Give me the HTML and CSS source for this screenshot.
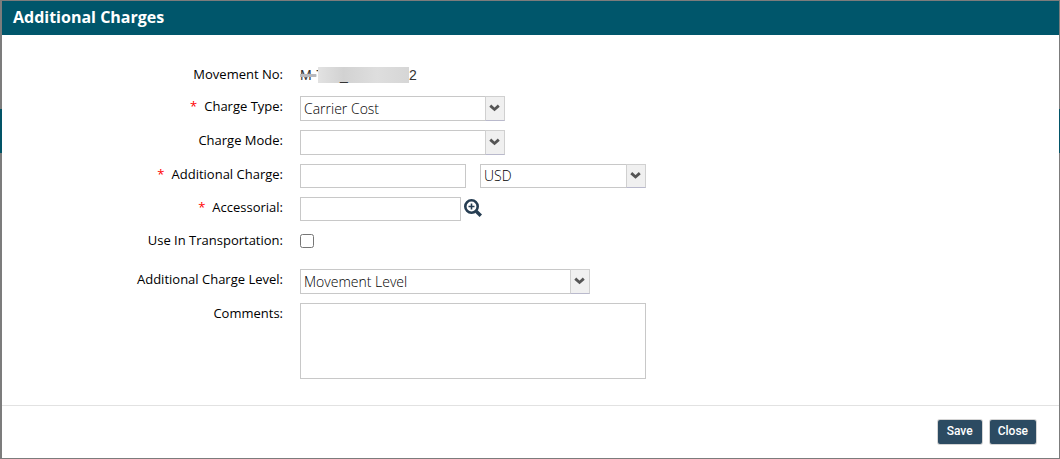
FILE: index.html
```html
<!DOCTYPE html>
<html lang="en">
<head>
<meta charset="utf-8">
<title>Additional Charges</title>
<link rel="stylesheet" href="styles.css">
</head>
<body>
<form class="dialog">
  <h1 class="dialog-title">Additional Charges</h1>
  <div class="fields">
    <span class="label">Movement No:</span>
    <div class="control value"><s class="struck">M-</s><span>T</span><span class="redacted">_</span><span>2</span></div>

    <label class="label" for="type"><span class="required">*</span>Charge Type:</label>
    <div class="control"><span class="picker medium"><select id="type"><option>Carrier Cost</option></select><svg class="arrow" viewBox="0 0 19 23"><path d="M4.500 8.500l4.500 4 4.500-4"/></svg></span></div>

    <label class="label" for="mode">Charge Mode:</label>
    <div class="control"><span class="picker medium"><select id="mode"><option></option></select><svg class="arrow" viewBox="0 0 19 23"><path d="M4.500 8.500l4.500 4 4.500-4"/></svg></span></div>

    <label class="label" for="amount"><span class="required">*</span>Additional Charge:</label>
    <div class="control amount-row"><input class="text-box amount" id="amount" type="text"><span class="picker currency"><select aria-label="Currency"><option>USD</option></select><svg class="arrow" viewBox="0 0 19 23"><path d="M4.500 8.500l4.500 4 4.500-4"/></svg></span></div>

    <label class="label" for="accessorial"><span class="required">*</span>Accessorial:</label>
    <div class="control lookup-row"><input class="text-box lookup" id="accessorial" type="text"><button class="search" type="button" aria-label="Find accessorial"><svg viewBox="0 0 18 18"><circle cx="7.500" cy="7.500" r="6.200"/><path class="plus" d="M4.500 7.500h6M7.500 4.500v6"/><path class="handle" d="M12.200 12.200l4.600 4.600"/></svg></button></div>

    <label class="label" for="transport">Use In Transportation:</label>
    <div class="control check-row"><input class="check" id="transport" type="checkbox"></div>

    <label class="label" for="level">Additional Charge Level:</label>
    <div class="control"><span class="picker wide"><select id="level"><option>Movement Level</option></select><svg class="arrow" viewBox="0 0 19 23"><path d="M4.500 8.500l4.500 4 4.500-4"/></svg></span></div>

    <label class="label" for="comments">Comments:</label>
    <div class="control"><textarea class="comments" id="comments"></textarea></div>
  </div>
  <footer class="actions">
    <button class="button" type="button">Save</button>
    <button class="button" type="button">Close</button>
  </footer>
</form>
</body>
</html>
```

FILE: styles.css
```css
* { box-sizing: border-box; }
body {
  margin: 0;
  min-height: 100vh;
  padding: 1px 1px 2px 2px;
  display: flex;
  background: linear-gradient(#7c7c7c 109px, #025467 109px, #025467 153px, #7c7c7c 153px);
  font-family: "Open Sans", sans-serif;
}
.dialog {
  flex: 1;
  display: flex;
  flex-direction: column;
  background: #fff;
}
.dialog-title {
  margin: 0;
  padding: 0 11px 2px;
  background: #00566b;
  color: #fff;
  font-size: 16px;
  line-height: 32px;
  font-weight: 700;
}
.fields {
  flex: 1;
  display: grid;
  grid-template-columns: 281px 1fr;
  column-gap: 17px;
  row-gap: 9px;
  align-content: start;
  padding: 29px 0 26px;
}
.label {
  color: #000;
  font-size: 13px;
  line-height: 21px;
  text-align: right;
}
.required {
  color: #f00;
  margin-right: 7px;
}
.control { display: flex; }
.value {
  height: 23px;
  padding-bottom: 2px;
  align-items: center;
  color: #333;
  font-family: "Liberation Sans", Arial, sans-serif;
  font-size: 14px;
  line-height: 16px;
}
.struck { text-decoration: line-through 3px #b8b8bc; }
.redacted {
  isolation: isolate;
  width: 91px;
  height: 16px;
  margin-left: -7px;
  padding-left: 22px;
  line-height: 16px;
  background: linear-gradient(90deg, #e2e2e2, #d2d2d2 28%, #dedede 65%, #d6d6d6);
}
.picker {
  display: grid;
  height: 25px;
}
.picker > * { grid-area: 1 / 1; }
.medium { width: 205px; }
.wide { width: 290px; }
.currency { width: 166px; height: 24px; }
.picker select {
  appearance: none;
  width: 100%;
  height: 100%;
  padding: 0 24px 1px 3px;
  border: 1px solid #c8c8c8;
  border-radius: 0;
  background: #fff;
  color: #000;
  font: 300 14px "Open Sans", sans-serif;
}
.arrow {
  justify-self: end;
  width: 20px;
  height: 100%;
  border: 1px solid #d0d0d0;
  border-bottom-color: #b9b9cc;
  background: #f0f0f0;
  fill: none;
  stroke: #555;
  stroke-width: 3;
  pointer-events: none;
}
.text-box, .comments {
  height: 24px;
  border: 1px solid #c8c8c8;
  border-radius: 0;
  background: #fff;
  color: #000;
  font: 300 14px "Open Sans", sans-serif;
}
.amount-row { gap: 14px; }
.amount { width: 166px; }
.lookup-row { gap: 3px; }
.lookup { width: 161px; }
.search {
  width: 18px;
  height: 24px;
  padding: 0 0 2px;
  border: 0;
  background: none;
}
.search svg {
  display: block;
  width: 18px;
  height: 18px;
  fill: none;
  stroke: #263d52;
  stroke-width: 2.6;
}
.search .plus { stroke-width: 1.6; }
.search .handle { stroke-width: 3.4; }
.check-row { height: 30px; }
.check {
  width: 14px;
  height: 14px;
  margin: 4px 0 0;
}
.comments {
  width: 346px;
  height: 76px;
  resize: none;
}
.actions {
  display: flex;
  justify-content: flex-end;
  gap: 8px;
  padding: 14px 23px;
  border-top: 1px solid #e2e2e2;
}
.button {
  height: 24px;
  padding: 0 8px 2px;
  min-width: 44px;
  border: 0;
  border-radius: 2px;
  background: #2c4b62;
  box-shadow: 0 0 0 1px #d4d4d4;
  color: #fff;
  font: 500 12px Roboto, sans-serif;
}
```
